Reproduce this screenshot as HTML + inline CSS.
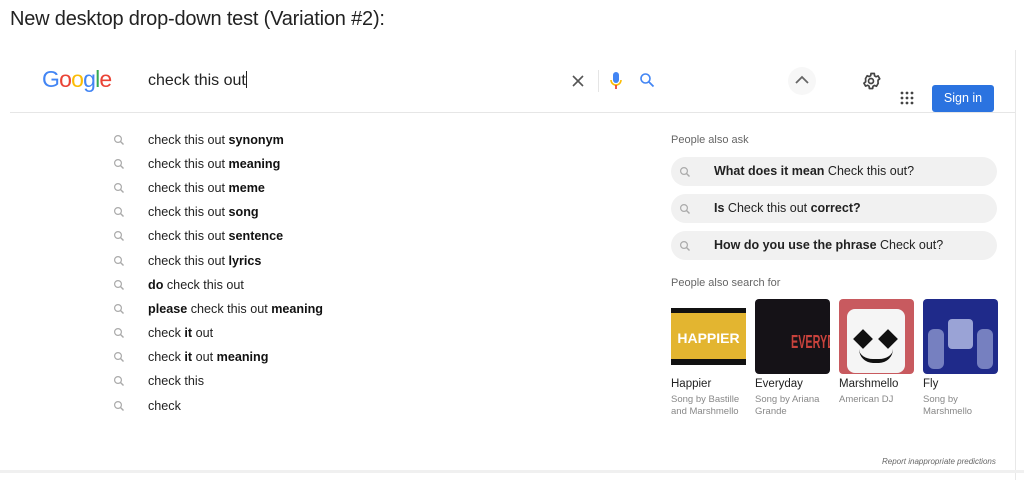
<!DOCTYPE html>
<html><head><meta charset="utf-8"><style>
*{margin:0;padding:0;box-sizing:border-box}
body{width:1024px;height:484px;background:#fff;font-family:"Liberation Sans",Arial,sans-serif;position:relative;overflow:hidden;color:#222}
.abs{position:absolute}
.title{left:10px;top:8px;font-size:20px;color:#222;letter-spacing:-0.2px}
.logo{left:42px;top:66px;font-size:23px;letter-spacing:-0.8px}
.q{left:148px;top:71px;font-size:16px;color:#222}
.sug{left:148px;font-size:12.6px;color:#222}
.sug b{color:#111}
.chip{left:671px;width:326px;height:29px;background:#f1f1f1;border-radius:15px}
.chip span{position:absolute;left:43px;top:7px;font-size:12.5px;color:#222}
.card{width:75px;height:75px;top:299px;border-radius:4px;overflow:hidden}
.cn{font-size:11.5px;color:#222;top:378px}
.cs{font-size:9.5px;color:#888;top:394px;line-height:12px}
</style></head><body>
<div class="abs title">New desktop drop-down test (Variation #2):</div>
<div class="abs" style="left:1015px;top:50px;width:1px;height:430px;background:#e8e8e8"></div>
<div class="abs logo"><span style="color:#4285f4">G</span><span style="color:#ea4335">o</span><span style="color:#fbbc05">o</span><span style="color:#4285f4">g</span><span style="color:#34a853">l</span><span style="color:#ea4335">e</span></div>
<div class="abs q">check this out<span style="border-left:1px solid #222;height:17px;display:inline-block;vertical-align:-3px"></span></div>
<svg class="abs" style="left:571px;top:74px" width="14" height="14"><path d="M2 2L12 12M12 2L2 12" stroke="#555" stroke-width="1.6"/></svg>
<div class="abs" style="left:598px;top:70px;width:1px;height:22px;background:#e5e5e5"></div>
<svg class="abs" style="left:609px;top:71px" width="14" height="20"><rect x="4" y="1" width="6" height="11" rx="3" fill="#4285f4"/><path d="M2 9a5 5 0 0 0 10 0" stroke="#fbbc05" stroke-width="1.6" fill="none"/><path d="M7 14v4" stroke="#ea4335" stroke-width="1.8"/></svg>
<svg class="abs" style="left:639px;top:72px" width="16" height="16"><circle cx="6.5" cy="6.5" r="4.5" stroke="#4285f4" stroke-width="1.6" fill="none"/><path d="M10 10L14.5 14.5" stroke="#4285f4" stroke-width="1.8"/></svg>
<div class="abs" style="left:788px;top:67px;width:28px;height:28px;border-radius:50%;background:#f7f7f7"></div>
<svg class="abs" style="left:794px;top:74px" width="16" height="12"><path d="M2 9L8 3L14 9" stroke="#666" stroke-width="1.8" fill="none"/></svg>
<svg class="abs" style="left:861px;top:71px" width="20" height="20" viewBox="0 0 24 24"><circle cx="12" cy="12" r="3" stroke="#444" stroke-width="2" fill="none"/><path d="M19.4 13a7.5 7.5 0 0 0 0-2l2.1-1.6-2-3.5-2.5 1a7 7 0 0 0-1.7-1L15 3h-4l-.4 2.7a7 7 0 0 0-1.7 1l-2.5-1-2 3.5L4.6 11a7.5 7.5 0 0 0 0 2l-2.1 1.6 2 3.5 2.5-1a7 7 0 0 0 1.7 1L9 21h4l.4-2.7a7 7 0 0 0 1.7-1l2.5 1 2-3.5z" transform="translate(1 0)" stroke="#444" stroke-width="2" fill="none" stroke-linejoin="round"/></svg>
<svg class="abs" style="left:900px;top:91px" width="14" height="14"><g fill="#444"><circle cx="2" cy="2" r="1.4"/><circle cx="7" cy="2" r="1.4"/><circle cx="12" cy="2" r="1.4"/><circle cx="2" cy="7" r="1.4"/><circle cx="7" cy="7" r="1.4"/><circle cx="12" cy="7" r="1.4"/><circle cx="2" cy="12" r="1.4"/><circle cx="7" cy="12" r="1.4"/><circle cx="12" cy="12" r="1.4"/></g></svg>
<div class="abs" style="left:932px;top:85px;width:62px;height:27px;background:#2b73e0;border-radius:3px;color:#fff;font-size:12.5px;text-align:center;line-height:27px">Sign in</div>
<div class="abs" style="left:10px;top:112px;width:1005px;height:1px;background:#e6e6e6"></div>

<svg width="0" height="0" style="position:absolute"><defs><g id="mg"><circle cx="5" cy="5" r="3.4" stroke="#aaa" stroke-width="1.2" fill="none"/><path d="M7.5 7.5L10.5 10.5" stroke="#aaa" stroke-width="1.4"/></g></defs></svg>

<div class="abs sug" style="top:133px">check this out <b>synonym</b></div>
<div class="abs sug" style="top:157px">check this out <b>meaning</b></div>
<div class="abs sug" style="top:181px">check this out <b>meme</b></div>
<div class="abs sug" style="top:205px">check this out <b>song</b></div>
<div class="abs sug" style="top:229px">check this out <b>sentence</b></div>
<div class="abs sug" style="top:254px">check this out <b>lyrics</b></div>
<div class="abs sug" style="top:278px"><b>do</b> check this out</div>
<div class="abs sug" style="top:302px"><b>please</b> check this out <b>meaning</b></div>
<div class="abs sug" style="top:326px">check <b>it</b> out</div>
<div class="abs sug" style="top:350px">check <b>it</b> out <b>meaning</b></div>
<div class="abs sug" style="top:374px">check this</div>
<div class="abs sug" style="top:399px">check</div>
<svg class="abs" style="left:113px;top:134px" width="14" height="290">
<use href="#mg" y="0"/><use href="#mg" y="24"/><use href="#mg" y="48"/><use href="#mg" y="72"/><use href="#mg" y="96"/><use href="#mg" y="121"/><use href="#mg" y="145"/><use href="#mg" y="169"/><use href="#mg" y="193"/><use href="#mg" y="217"/><use href="#mg" y="241"/><use href="#mg" y="266"/></svg>

<div class="abs" style="left:671px;top:134px;font-size:11px;color:#666">People also ask</div>
<div class="abs chip" style="top:157px"><svg class="abs" style="left:8px;top:9px" width="14" height="14"><use href="#mg"/></svg><span><b>What does it mean</b> Check this out?</span></div>
<div class="abs chip" style="top:194px"><svg class="abs" style="left:8px;top:9px" width="14" height="14"><use href="#mg"/></svg><span><b>Is</b> Check this out <b>correct?</b></span></div>
<div class="abs chip" style="top:231px"><svg class="abs" style="left:8px;top:9px" width="14" height="14"><use href="#mg"/></svg><span><b>How do you use the phrase</b> Check out?</span></div>

<div class="abs" style="left:671px;top:277px;font-size:11px;color:#666">People also search for</div>
<div class="abs" style="left:671px;top:308px;width:75px;height:57px;background:#111"><div style="position:absolute;top:5px;left:0;width:75px;height:46px;background:#e3b530;color:#fff;font-weight:bold;font-size:14px;text-align:center;line-height:50px">HAPPIER</div></div>
<div class="abs card" style="left:755px;background:#151217"><div style="position:absolute;left:36px;top:33px;color:#c8423c;font-size:18px;font-weight:bold;transform:scaleX(.6);transform-origin:left">EVERYDAY</div></div>
<div class="abs card" style="left:839px;background:#c85a5f"><div style="position:absolute;left:8px;top:10px;width:58px;height:64px;background:#f5f5f5;border-radius:8px"></div><div style="position:absolute;left:17px;top:33px;width:14px;height:14px;background:#111;transform:rotate(45deg)"></div><div style="position:absolute;left:42px;top:33px;width:14px;height:14px;background:#111;transform:rotate(45deg)"></div><div style="position:absolute;left:20px;top:50px;width:34px;height:14px;border-bottom:4px solid #111;border-radius:0 0 20px 20px"></div></div>
<div class="abs card" style="left:923px;background:#1f2a8a"><div style="position:absolute;left:25px;top:20px;width:25px;height:30px;background:#9aa3d6;border-radius:4px"></div><div style="position:absolute;left:5px;top:30px;width:16px;height:40px;background:#7680c0;border-radius:6px"></div><div style="position:absolute;left:54px;top:30px;width:16px;height:40px;background:#7680c0;border-radius:6px"></div></div>
<div class="abs cn" style="left:671px">Happier</div>
<div class="abs cn" style="left:755px">Everyday</div>
<div class="abs cn" style="left:839px">Marshmello</div>
<div class="abs cn" style="left:923px">Fly</div>
<div class="abs cs" style="left:671px">Song by Bastille<br>and Marshmello</div>
<div class="abs cs" style="left:755px">Song by Ariana<br>Grande</div>
<div class="abs cs" style="left:839px">American DJ</div>
<div class="abs cs" style="left:923px">Song by<br>Marshmello</div>

<div class="abs" style="left:882px;top:457px;font-size:8px;font-style:italic;color:#666">Report inappropriate predictions</div>
<div class="abs" style="left:0;top:470px;width:1024px;height:3px;background:#f0f0f0"></div>
</body></html>
